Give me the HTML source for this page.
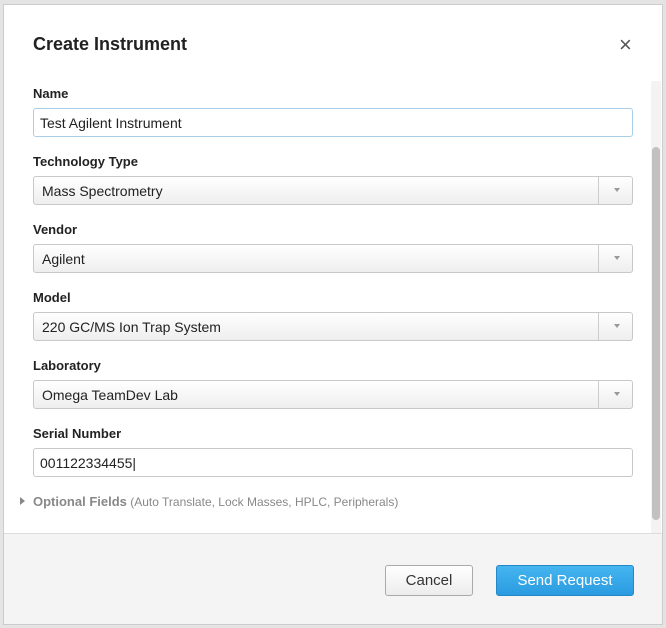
<!DOCTYPE html>
<html><head><style>
*{box-sizing:border-box;margin:0;padding:0}
body{width:666px;height:628px;background:#e4e4e4;font-family:"Liberation Sans",sans-serif;position:relative;overflow:hidden}
.dlg{position:absolute;left:3px;top:4px;width:660px;height:621px;background:#fff;border:1px solid #ccc}
h1{position:absolute;left:29px;top:29px;font-size:18px;font-weight:bold;color:#222}
.x{position:absolute;left:615px;top:30px;font-size:22px;color:#555;line-height:20px}
.lbl{position:absolute;left:29px;font-size:13px;font-weight:bold;color:#222}
.in{position:absolute;left:29px;width:600px;height:29px;border:1px solid #c8c8c8;border-radius:3px;font-size:14px;color:#222;padding:6px 6px;line-height:16px}
.sel{background:linear-gradient(#fff,#eee);padding-left:8px}
.sel:after{content:"";position:absolute;right:0;top:0;width:33px;height:27px;border-left:1px solid #ccc}
.sel i{position:absolute;right:12px;top:11px;border-left:3px solid transparent;border-right:3px solid transparent;border-top:4px solid #999}
.opt{position:absolute;left:29px;top:489px;font-size:12px;color:#888}
.opt b{font-size:13px}
.tri{position:absolute;left:16px;top:492px;border-top:4px solid transparent;border-bottom:4px solid transparent;border-left:5px solid #888}
.foot{position:absolute;left:0;top:528px;width:658px;height:91px;background:#f4f4f4;border-top:1px solid #ddd}
.sb{position:absolute;left:647px;top:76px;width:10px;height:452px;background:#f3f3f3}
.sb i{position:absolute;left:1px;top:66px;width:8px;height:373px;background:#c1c1c1;border-radius:4px}
.btn{position:absolute;top:560px;height:31px;border-radius:3px;font-size:15px;text-align:center;line-height:29px}
</style></head><body>
<div class="dlg">
<h1>Create Instrument</h1>
<div class="x">×</div>
<div class="sb"><i></i></div>
<div class="lbl" style="top:81px">Name</div>
<div class="in" style="top:103px;border-color:#a9cfe8">Test Agilent Instrument</div>
<div class="lbl" style="top:149px">Technology Type</div>
<div class="in sel" style="top:171px">Mass Spectrometry<i></i></div>
<div class="lbl" style="top:217px">Vendor</div>
<div class="in sel" style="top:239px">Agilent<i></i></div>
<div class="lbl" style="top:285px">Model</div>
<div class="in sel" style="top:307px">220 GC/MS Ion Trap System<i></i></div>
<div class="lbl" style="top:353px">Laboratory</div>
<div class="in sel" style="top:375px">Omega TeamDev Lab<i></i></div>
<div class="lbl" style="top:421px">Serial Number</div>
<div class="in" style="top:443px">001122334455|</div>
<div class="tri"></div>
<div class="opt"><b>Optional Fields</b> (Auto Translate, Lock Masses, HPLC, Peripherals)</div>
<div class="foot"></div>
<div class="btn" style="left:381px;width:88px;background:linear-gradient(#fff,#ececec);border:1px solid #aaa;color:#333">Cancel</div>
<div class="btn" style="left:492px;width:138px;background:linear-gradient(#45b5f0,#2a9be0);border:1px solid #2488c8;color:#fff">Send Request</div>
</div>
</body></html>
